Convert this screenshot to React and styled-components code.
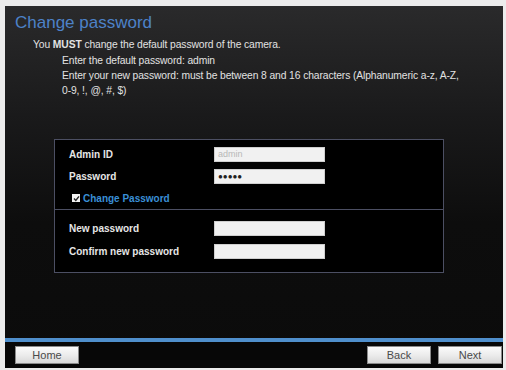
import React from "react";
import styled, { createGlobalStyle } from "styled-components";

const Global = createGlobalStyle`
  html, body { margin: 0; padding: 0; }
  body {
    background: #ececec;
    font-family: "Liberation Sans", Arial, sans-serif;
    width: 506px;
    height: 370px;
    overflow: hidden;
  }
`;

const Frame = styled.div`
  margin: 6px 3px 2px 5px;
  width: 498px;
  height: 362px;
  display: flex;
  flex-direction: column;
  background: linear-gradient(180deg, #2a2a2b 0%, #1a1a1b 30%, #0d0d0d 60%, #0b0b0b 100%);
`;

const Content = styled.div`
  flex: 1;
  display: flex;
  flex-direction: column;
  padding: 7px 0 0 10px;
`;

const Title = styled.h1`
  margin: 0;
  font-size: 17px;
  line-height: 20px;
  font-weight: normal;
  color: #4d82c8;
`;

const Text = styled.p`
  margin: 0;
  padding-left: ${(p) => p.$indent}px;
  font-size: 10.3px;
  line-height: 15px;
  color: #e2e2e2;
  letter-spacing: -0.1px;
  white-space: nowrap;
  b { font-weight: bold; }
`;

const Intro = styled.div`
  margin-top: 4px;
  display: flex;
  flex-direction: column;
  gap: 1px;
`;

const Box = styled.div`
  margin: 41px 0 0 39px;
  width: 388px;
  border: 1px solid #4c4f63;
  background: #000;
`;

const Section = styled.div`
  padding: ${(p) => p.$pad};
  border-top: ${(p) => (p.$divided ? "1px solid #4c4f63" : "none")};
`;

const Row = styled.div`
  display: grid;
  grid-template-columns: 145px 111px;
  align-items: center;
  height: ${(p) => p.$h}px;
  padding-left: 14px;
`;

const Label = styled.span`
  font-size: 10px;
  font-weight: bold;
  color: #e6e6e6;
`;

const Input = styled.div`
  height: 15px;
  background: #f1f1f1;
  border: 1px solid #cfcfcf;
  box-sizing: border-box;
  display: flex;
  align-items: center;
  padding-left: 3px;
  font-size: ${(p) => (p.$dots ? "8px" : "9px")};
  color: ${(p) => (p.$muted ? "#b8b8b8" : "#222")};
`;

const CheckRow = styled.div`
  display: flex;
  align-items: center;
  height: 22px;
  padding-left: 17px;
  gap: 3px;
`;

const Check = styled.span`
  width: 8px;
  height: 8px;
  background: #f2f2f2;
  display: flex;
  align-items: center;
  justify-content: center;
`;

const LinkText = styled.span`
  font-size: 10px;
  font-weight: bold;
  color: #3a8fd6;
`;

const BlueBar = styled.div`
  height: 4px;
  background: #4f8fcc;
`;

const Footer = styled.div`
  height: 26px;
  display: flex;
  align-items: flex-start;
  padding: 4px 1px 0 10px;
  box-sizing: border-box;
  background: #070707;
  gap: 7px;
`;

const Button = styled.button`
  width: 64px;
  height: 18px;
  margin-left: ${(p) => (p.$push ? "auto" : "0")};
  padding: 0;
  border: 1px solid #8a8a8a;
  background: linear-gradient(180deg, #fbfbfb 0%, #ececec 50%, #d9d9d9 100%);
  font-family: "Liberation Sans", Arial, sans-serif;
  font-size: 11px;
  color: #4a4a4a;
`;

export default function App() {
  return (
    <>
      <Global />
      <Frame>
        <Content>
          <Title>Change password</Title>
          <Intro>
            <Text $indent={18}>
              You <b>MUST</b> change the default password of the camera.
            </Text>
            <div>
              <Text $indent={47}>Enter the default password: admin</Text>
              <Text $indent={47}>
                Enter your new password: must be between 8 and 16 characters (Alphanumeric a-z, A-Z,
              </Text>
              <Text $indent={47}>0-9, !, @, #, $)</Text>
            </div>
          </Intro>
          <Box>
            <Section $pad="3px 0 0 0">
              <Row $h={22}>
                <Label>Admin ID</Label>
                <Input $muted>admin</Input>
              </Row>
              <Row $h={22}>
                <Label>Password</Label>
                <Input $dots>●●●●●</Input>
              </Row>
              <CheckRow>
                <Check>
                  <svg width="7" height="7" viewBox="0 0 7 7">
                    <path d="M1 3.6 L2.8 5.4 L6 1.4" stroke="#222" strokeWidth="1.4" fill="none" />
                  </svg>
                </Check>
                <LinkText>Change Password</LinkText>
              </CheckRow>
            </Section>
            <Section $divided $pad="7px 0 9px 0">
              <Row $h={23}>
                <Label>New password</Label>
                <Input />
              </Row>
              <Row $h={23}>
                <Label>Confirm new password</Label>
                <Input />
              </Row>
            </Section>
          </Box>
        </Content>
        <BlueBar />
        <Footer>
          <Button>Home</Button>
          <Button $push>Back</Button>
          <Button>Next</Button>
        </Footer>
      </Frame>
    </>
  );
}
